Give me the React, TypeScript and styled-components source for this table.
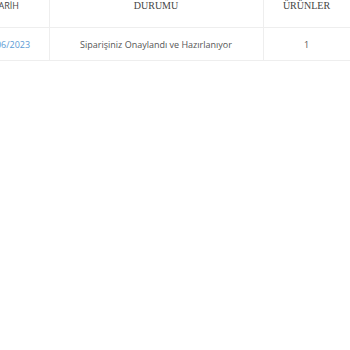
import React, { useLayoutEffect, useRef } from 'react';
import styled, { createGlobalStyle } from 'styled-components';

const GlobalStyle = createGlobalStyle`
  html, body {
    margin: 0;
    background: #ffffff;
  }
`;

const Scroller = styled.div`
  width: 350px;
  overflow-x: auto;
  scrollbar-width: none;
  &::-webkit-scrollbar {
    display: none;
  }
`;

const OrdersTable = styled.table`
  border-collapse: collapse;
  table-layout: fixed;
  width: 386px;
  box-shadow: 0 2px 3px rgba(0, 0, 0, 0.04);
`;

const HeadCell = styled.th<{ $sans?: boolean }>`
  height: 27px;
  box-sizing: border-box;
  padding: 0 6px 16px;
  font-family: ${(p) => (p.$sans ? '"Open Sans", sans-serif' : '"Liberation Serif", serif')};
  font-size: ${(p) => (p.$sans ? '9px' : '10px')};
  font-weight: normal;
  color: #444;
  text-align: center;
  vertical-align: bottom;
  line-height: 11px;
  border-right: 1px solid #eeeeee;
  border-bottom: 1px solid #eeeeee;
`;

const Cell = styled.td<{ $link?: boolean }>`
  height: 33px;
  box-sizing: border-box;
  padding: 0 6px;
  font-family: "Open Sans", sans-serif;
  font-size: 9px;
  color: ${(p) => (p.$link ? '#5b9bd5' : '#555')};
  text-align: center;
  vertical-align: middle;
  border-right: 1px solid #eeeeee;
  border-bottom: 1px solid #eeeeee;
`;

const App = () => {
  const ref = useRef<HTMLDivElement>(null);

  useLayoutEffect(() => {
    if (ref.current) ref.current.scrollLeft = 36;
  }, []);

  return (
    <>
      <GlobalStyle />
      <Scroller ref={ref}>
        <OrdersTable>
          <colgroup>
            <col style={{ width: 85 }} />
            <col style={{ width: 214 }} />
            <col style={{ width: 87 }} />
          </colgroup>
          <thead>
            <tr>
              <HeadCell $sans>TARİH</HeadCell>
              <HeadCell>DURUMU</HeadCell>
              <HeadCell>ÜRÜNLER</HeadCell>
            </tr>
          </thead>
          <tbody>
            <tr>
              <Cell $link>06/06/2023</Cell>
              <Cell>Siparişiniz Onaylandı ve Hazırlanıyor</Cell>
              <Cell>1</Cell>
            </tr>
          </tbody>
        </OrdersTable>
      </Scroller>
    </>
  );
};

export default App;
